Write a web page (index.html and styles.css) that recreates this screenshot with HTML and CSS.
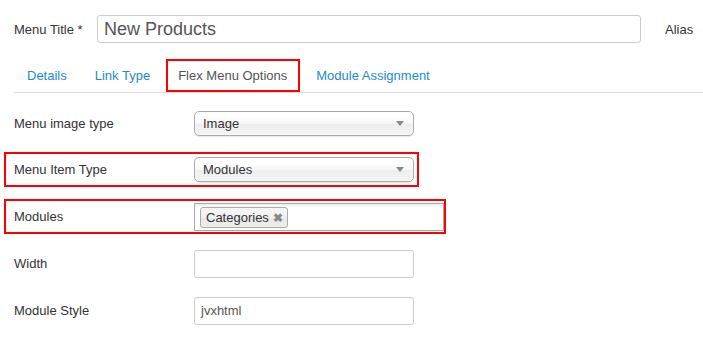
FILE: index.html
```html
<!DOCTYPE html>
<html lang="en">
<head>
  <meta charset="UTF-8">
  <title>Menu Item</title>
  <link rel="stylesheet" href="styles.css">
</head>
<body>
  <div class="title-row">
    <label class="title-label">Menu Title *</label>
    <div class="title-input">New Products</div>
    <span class="alias">Alias</span>
  </div>

  <ul class="tabs">
    <li class="tab">Details</li>
    <li class="tab">Link Type</li>
    <li class="tab active">Flex Menu Options</li>
    <li class="tab">Module Assignment</li>
  </ul>

  <div class="form">
    <div class="row">
      <span class="label">Menu image type</span>
      <div class="select">Image<span class="arrow"></span></div>
    </div>
    <div class="row mark mark-select">
      <span class="label">Menu Item Type</span>
      <div class="select">Modules<span class="arrow"></span></div>
    </div>
    <div class="row mark mark-multi">
      <span class="label">Modules</span>
      <div class="multi">
        <span class="chip">Categories <span class="chip-x">&#10006;</span></span>
      </div>
    </div>
    <div class="row">
      <span class="label">Width</span>
      <div class="text-input"></div>
    </div>
    <div class="row">
      <span class="label">Module Style</span>
      <div class="text-input">jvxhtml</div>
    </div>
  </div>
</body>
</html>
```

FILE: styles.css
```css
body {
  margin: 0;
  background: #fff;
  color: #333;
  font-family: "Liberation Sans", Arial, sans-serif;
  font-size: 13px;
}
.title-row {
  display: flex;
  align-items: center;
  height: 28px;
  margin-top: 15px;
  padding-left: 14px;
}
.title-label {
  width: 83px;
}
.title-input {
  box-sizing: border-box;
  width: 544px;
  height: 28px;
  line-height: 26px;
  border: 1px solid #ccc;
  border-radius: 3px;
  padding-left: 6px;
  font-size: 18px;
  color: #555;
}
.alias {
  margin-left: 24px;
}
.tabs {
  list-style: none;
  display: flex;
  gap: 4px;
  margin: 16px 0 0 14px;
  padding: 0 0 0 1px;
  border-bottom: 1px solid #ddd;
}
.tab {
  height: 33px;
  line-height: 33px;
  padding: 0 12px;
  color: #1a8bd0;
}
.tab.active {
  box-sizing: border-box;
  border: 2px solid #f00;
  padding: 0 11px 0 10px;
  line-height: 29px;
  color: #555;
}
.form {
  padding: 13px 0 0 4px;
}
.row {
  box-sizing: border-box;
  display: flex;
  align-items: center;
  width: fit-content;
  height: 35px;
  margin-top: 12px;
  padding: 0 0 0 8px;
  border: 2px solid transparent;
}
.row:first-child {
  margin-top: 0;
}
.row.mark-select {
  margin-top: 11px;
}
.mark {
  border-color: #f00;
}
.mark-select {
  padding-right: 3px;
}
.label {
  width: 180px;
}
.select {
  box-sizing: border-box;
  position: relative;
  width: 220px;
  height: 25px;
  line-height: 23px;
  padding-left: 8px;
  border: 1px solid #aaa;
  border-radius: 5px;
  background: linear-gradient(#fff 20%, #f6f6f6 50%, #eee 52%, #f4f4f4);
  box-shadow: 0 0 3px #fff inset, 0 1px 1px rgba(0, 0, 0, 0.1);
}
.arrow {
  position: absolute;
  right: 9px;
  top: 9px;
  border-left: 4px solid transparent;
  border-right: 4px solid transparent;
  border-top: 5px solid #888;
}
.multi {
  box-sizing: border-box;
  width: 250px;
  height: 28px;
  padding: 3px 5px;
  border: 1px solid #aaa;
  background: linear-gradient(#eee 1%, #fff 15%);
}
.chip {
  box-sizing: border-box;
  display: inline-block;
  height: 21px;
  line-height: 19px;
  padding: 0 4px 0 5px;
  border: 1px solid #aaa;
  border-radius: 3px;
  background: linear-gradient(#f4f4f4 20%, #f0f0f0 50%, #e8e8e8 52%, #eee);
  color: #333;
}
.chip-x {
  color: #888;
  font-size: 12px;
  font-weight: bold;
  margin-left: 1px;
}
.text-input {
  box-sizing: border-box;
  width: 220px;
  height: 28px;
  line-height: 26px;
  padding-left: 6px;
  border: 1px solid #ccc;
  border-radius: 3px;
  color: #555;
}
```
